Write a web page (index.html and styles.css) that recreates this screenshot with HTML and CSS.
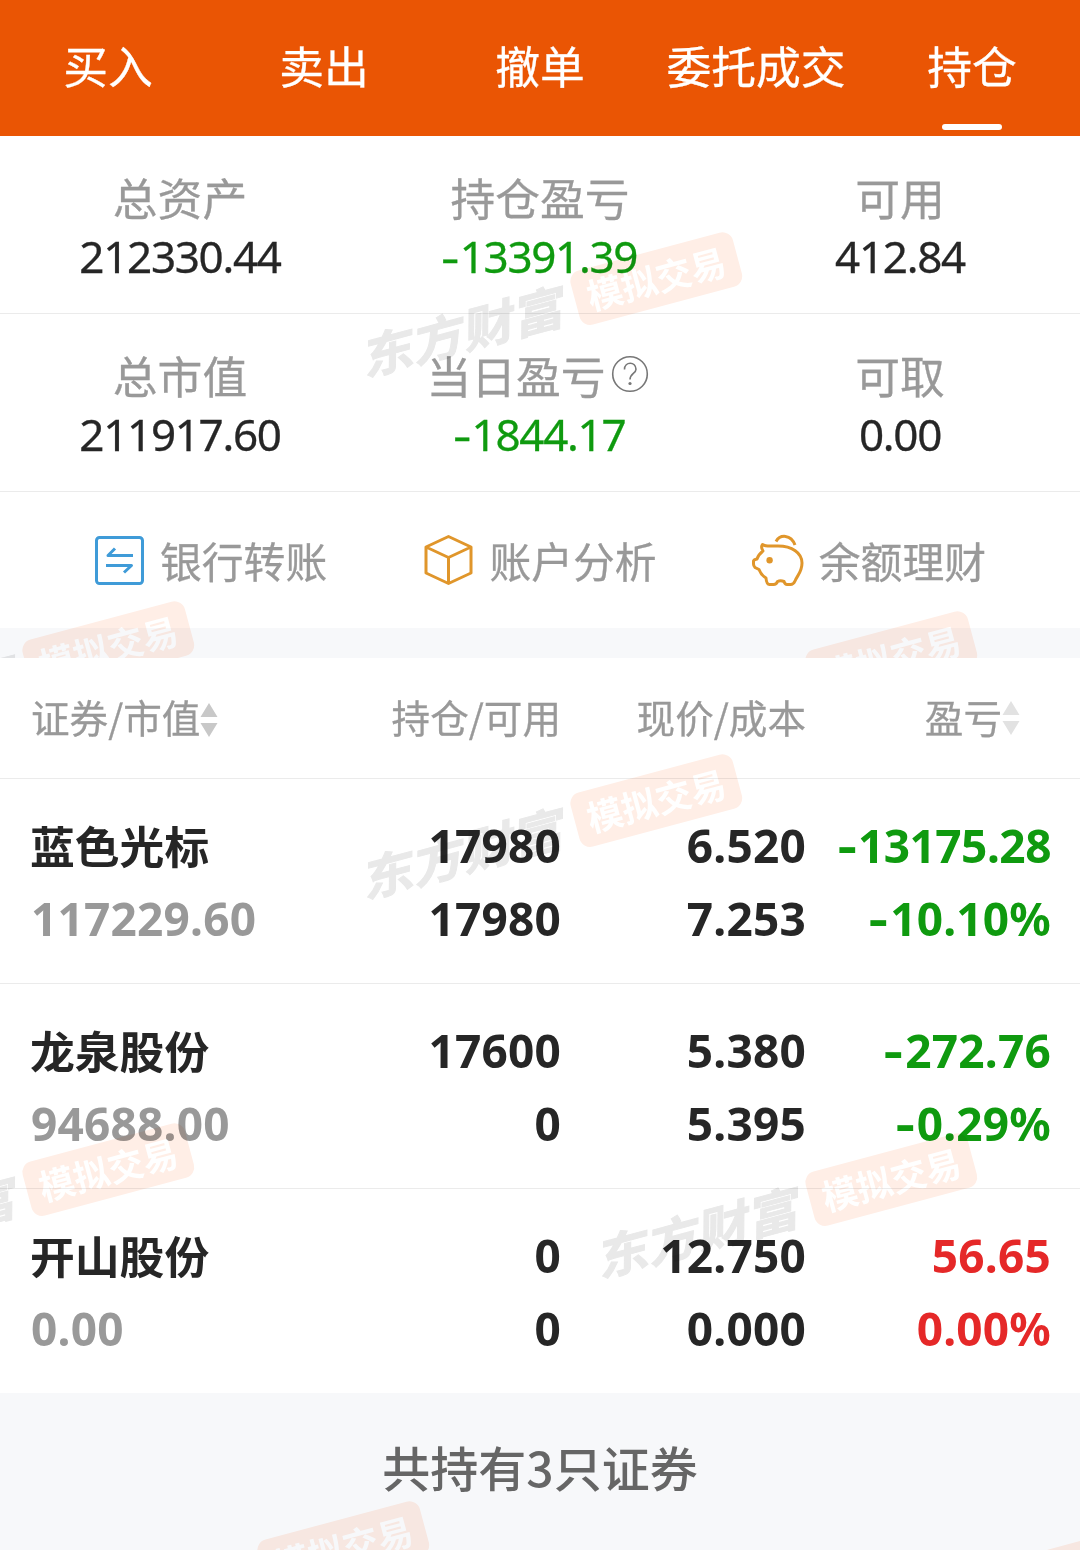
FILE: index.html
```html
<!DOCTYPE html>
<html lang="zh-CN">

<head>
    <meta charset="UTF-8">
    <meta name="viewport" content="width=device-width, initial-scale=1.0">
    <title>持仓</title>
    <link rel="stylesheet" href="styles.css">
</head>

<body>
    <ul class="tabs">
        <li><a href="#">买入</a></li>
        <li><a href="#">卖出</a></li>
        <li><a href="#">撤单</a></li>
        <li><a href="#">委托成交</a></li>
        <li class="current"><a href="#">持仓</a></li>
    </ul>

    <div class="account">
        <div class="summary">
            <div class="item">
                <p class="label">总资产</p>
                <p class="value">212330.44</p>
            </div>
            <div class="item">
                <p class="label">持仓盈亏</p>
                <p class="value down"><span class="minus">-</span>13391.39</p>
            </div>
            <div class="item">
                <p class="label">可用</p>
                <p class="value">412.84</p>
            </div>
        </div>
        <div class="summary">
            <div class="item">
                <p class="label">总市值</p>
                <p class="value">211917.60</p>
            </div>
            <div class="item">
                <p class="label today">当日盈亏<svg class="help" viewBox="0 0 38 38">
                        <circle cx="19" cy="19" r="17.3" />
                        <path d="M13.5 14.5C13.5 6.3 25 6.3 25 14.2C25 18.5 19 18.6 19 24.5" />
                        <circle class="dot" cx="19" cy="28.5" r="1.6" />
                    </svg></p>
                <p class="value down"><span class="minus">-</span>1844.17</p>
            </div>
            <div class="item">
                <p class="label">可取</p>
                <p class="value">0.00</p>
            </div>
        </div>
        <div class="actions">
            <a href="#">
                <svg class="blue" viewBox="0 0 52 52">
                    <rect x="3.5" y="3.5" width="46" height="46" rx="3" />
                    <path d="M40 21.5H15L22 14.5M13 31.5H38.5L31 38.5" />
                </svg>
                <span>银行转账</span>
            </a>
            <a href="#">
                <svg class="orange" viewBox="0 0 52 52">
                    <path d="M26.500 2.500L49 13V39L26.500 49.500L4 39V13ZM4 13L26.500 23.500L49 13M26.500 23.500V49.500" />
                </svg>
                <span>账户分析</span>
            </a>
            <a href="#">
                <svg class="orange" viewBox="0 0 52 52">
                    <path d="M24 7.5C28 .2 39 0 43 11" />
                    <path d="M10.5 10.5Q12.5 12 18.5 12H26C40 12 50 19 50 29C50 38 45.500 41 43 47Q41.500 50.500 38.500 50.500H35Q33 50.500 32 47.500Q28.500 46 25.500 47.500Q24.500 50.500 21.500 50.500H17.500Q14.500 50.500 14 44Q9 41 7 35.500L3 33.500Q1.500 32 1.500 30V27Q2 25.500 5 25Q6.500 20.500 11 17Q8.500 13 10.500 10.500Z" />
                    <circle class="dot" cx="17.600" cy="26.300" r="3.200" />
                </svg>
                <span>余额理财</span>
            </a>
        </div>
        <div class="band"></div>
        <div class="watermark">
            <div class="mark m1"><b>东方财富</b><i>模拟交易</i></div>
            <div class="mark m2"><b>东方财富</b><i>模拟交易</i></div>
            <div class="mark m3"><b>东方财富</b><i>模拟交易</i></div>
        </div>
    </div>

    <div class="holdings">
        <div class="row head">
            <span>证券/市值<svg class="sort" viewBox="0 0 18 36">
                    <path d="M9 1L17.500 15H.5ZM9 35L17.500 21H.5Z" />
                </svg></span>
            <span>持仓/可用</span>
            <span>现价/成本</span>
            <span class="profit">盈亏<svg class="sort light" viewBox="0 0 18 36">
                    <path d="M9 1L17.500 15H.5ZM9 35L17.500 21H.5Z" />
                </svg></span>
        </div>
        <div class="row">
            <div><p class="name">蓝色光标</p><p class="market">117229.60</p></div>
            <div><p>17980</p><p>17980</p></div>
            <div><p>6.520</p><p>7.253</p></div>
            <div class="down"><p class="long"><span class="minus">-</span>13175.28</p><p><span class="minus">-</span>10.10%</p></div>
        </div>
        <div class="row">
            <div><p class="name">龙泉股份</p><p class="market">94688.00</p></div>
            <div><p>17600</p><p>0</p></div>
            <div><p>5.380</p><p>5.395</p></div>
            <div class="down"><p><span class="minus">-</span>272.76</p><p><span class="minus">-</span>0.29%</p></div>
        </div>
        <div class="row">
            <div><p class="name">开山股份</p><p class="market">0.00</p></div>
            <div><p>0</p><p>0</p></div>
            <div><p>12.750</p><p>0.000</p></div>
            <div class="up"><p>56.65</p><p>0.00%</p></div>
        </div>
        <div class="total">共持有3只证券</div>
        <div class="watermark">
            <div class="mark m1"><b>东方财富</b><i>模拟交易</i></div>
            <div class="mark m2"><b>东方财富</b><i>模拟交易</i></div>
            <div class="mark m3"><b>东方财富</b><i>模拟交易</i></div>
            <div class="mark m4"><b>东方财富</b><i>模拟交易</i></div>
            <div class="mark m5"><b>东方财富</b><i>模拟交易</i></div>
        </div>
    </div>
</body>

</html>
```

FILE: styles.css
```css
* {
    margin: 0;
    padding: 0;
    box-sizing: border-box;
}

body {
    width: 1080px;
    height: 1550px;
    display: flex;
    flex-direction: column;
    overflow: hidden;
    background: #fff;
    color: #262626;
    font-family: "Noto Sans CJK SC", sans-serif;
}

ul {
    list-style: none;
}

a {
    color: inherit;
    text-decoration: none;
}

svg {
    fill: none;
    stroke-linejoin: round;
}

/* 顶部标签 */
.tabs {
    display: flex;
    height: 136px;
    background: #ea5504;
    color: #fff;
    font-size: 44.8px;
    line-height: 129px;
    text-align: center;
    -webkit-text-stroke: .3px;
}

.tabs li {
    width: 216px;
    position: relative;
}

.tabs .current::after {
    content: "";
    position: absolute;
    left: 78px;
    bottom: 6px;
    width: 60px;
    height: 6px;
    border-radius: 3px;
    background: #fff;
}

/* 资产 */
.account {
    height: 522px;
    position: relative;
    overflow: hidden;
}

.summary {
    display: flex;
    height: 178px;
    padding-top: 30px;
    border-bottom: 1px solid #ebebeb;
    text-align: center;
}

.item {
    width: 360px;
}

.label {
    display: flex;
    justify-content: center;
    align-items: center;
    height: 60px;
    font-size: 44.8px;
    line-height: 59px;
    color: #999;
    -webkit-text-stroke: .3px;
}

.today {
    margin-left: -5px;
}

.value {
    font-family: "Noto Sans", sans-serif;
    font-size: 44px;
    line-height: 60px;
    letter-spacing: -1.3px;
    -webkit-text-stroke: .3px;
}

.down {
    color: #0f9a0f;
}

.up {
    color: #e52828;
}

.minus {
    display: inline-block;
    margin-right: 4px;
    transform: scaleX(1.3);
}

.help {
    width: 38px;
    height: 38px;
    margin-left: 5px;
    stroke: #777;
    stroke-width: 1.6;
}

.dot {
    stroke: none;
    fill: #777;
}

.actions {
    display: flex;
    justify-content: space-between;
    height: 136px;
    padding: 0 94px 0 93px;
    color: #999;
    font-size: 41.8px;
    -webkit-text-stroke: .3px;
}

.actions a {
    display: flex;
    align-items: center;
}

.actions span {
    margin-top: -1px;
}

.actions svg {
    width: 52px;
    height: 52px;
    margin-right: 15px;
    stroke-width: 3;
}

.blue {
    stroke: #3f9bd8;
}

.orange {
    stroke: #e0962b;
}

.orange .dot {
    fill: #e0962b;
}

.band {
    height: 30px;
    background: #f7f8fa;
}

/* 持仓列表 */
.holdings {
    flex: 1;
    position: relative;
    overflow: hidden;
    background: #fff;
}

.row {
    display: grid;
    grid-template-columns: 280px 250px 245px 245px;
    height: 205px;
    padding: 30px 29px 0 31px;
    border-bottom: 1px solid #ebebeb;
    font-family: "Noto Sans", "Noto Sans CJK SC", sans-serif;
    font-size: 46px;
    font-weight: bold;
    line-height: 73px;
    text-align: right;
    letter-spacing: .2px;
}

.row > :first-child {
    text-align: left;
}

.row p {
    white-space: nowrap;
}

.row .name {
    position: relative;
    left: -1px;
    top: -1px;
    font-family: "Noto Sans CJK SC", sans-serif;
    font-size: 44.8px;
    letter-spacing: 0;
}

.row .long {
    letter-spacing: -.5px;
}

.market {
    color: #999;
}

.head {
    height: 121px;
    padding-top: 0;
    font-family: "Noto Sans CJK SC", sans-serif;
    font-size: 38.6px;
    font-weight: normal;
    line-height: 117px;
    letter-spacing: 0;
    color: #999;
    -webkit-text-stroke: .3px;
}

.head .profit {
    padding-right: 31px;
}

.sort {
    width: 18px;
    height: 36px;
    vertical-align: -5px;
    fill: #c8c8c8;
}

.light {
    vertical-align: -3px;
    fill: #e2e2e2;
}

.row:nth-child(4) {
    height: 204px;
    border-bottom: 0;
}

.total {
    height: 160px;
    background: #f7f8fa;
    color: #666;
    font-size: 48px;
    font-weight: 500;
    line-height: 147px;
    text-align: center;
}

/* 水印 */
.watermark {
    position: absolute;
    inset: 0;
    overflow: hidden;
    mix-blend-mode: multiply;
    pointer-events: none;
}

.mark {
    position: absolute;
    display: flex;
    align-items: center;
    justify-content: space-between;
    width: 387px;
    height: 56px;
    white-space: nowrap;
    transform: rotate(-15deg);
}

.mark b {
    font-size: 51px;
    font-weight: bold;
    font-style: italic;
    line-height: 56px;
    color: #e9e9e9;
    -webkit-text-stroke: 1px;
    transform: translate(-2px, -1px) scale(1.02, .92);
}

.mark i {
    width: 168px;
    height: 56px;
    border-radius: 11px;
    background: #ffeee6;
    color: #fff;
    font-size: 35.5px;
    font-weight: bold;
    font-style: normal;
    line-height: 53px;
    text-align: center;
}

.m1 {
    left: 357px;
    top: 143px;
}

.m2 {
    left: -191px;
    top: 512px;
}

.m3 {
    left: 592px;
    top: 522px;
}

.m4 {
    left: 44px;
    top: 890px;
}

.m5 {
    left: 827px;
    top: 900px;
}
```
